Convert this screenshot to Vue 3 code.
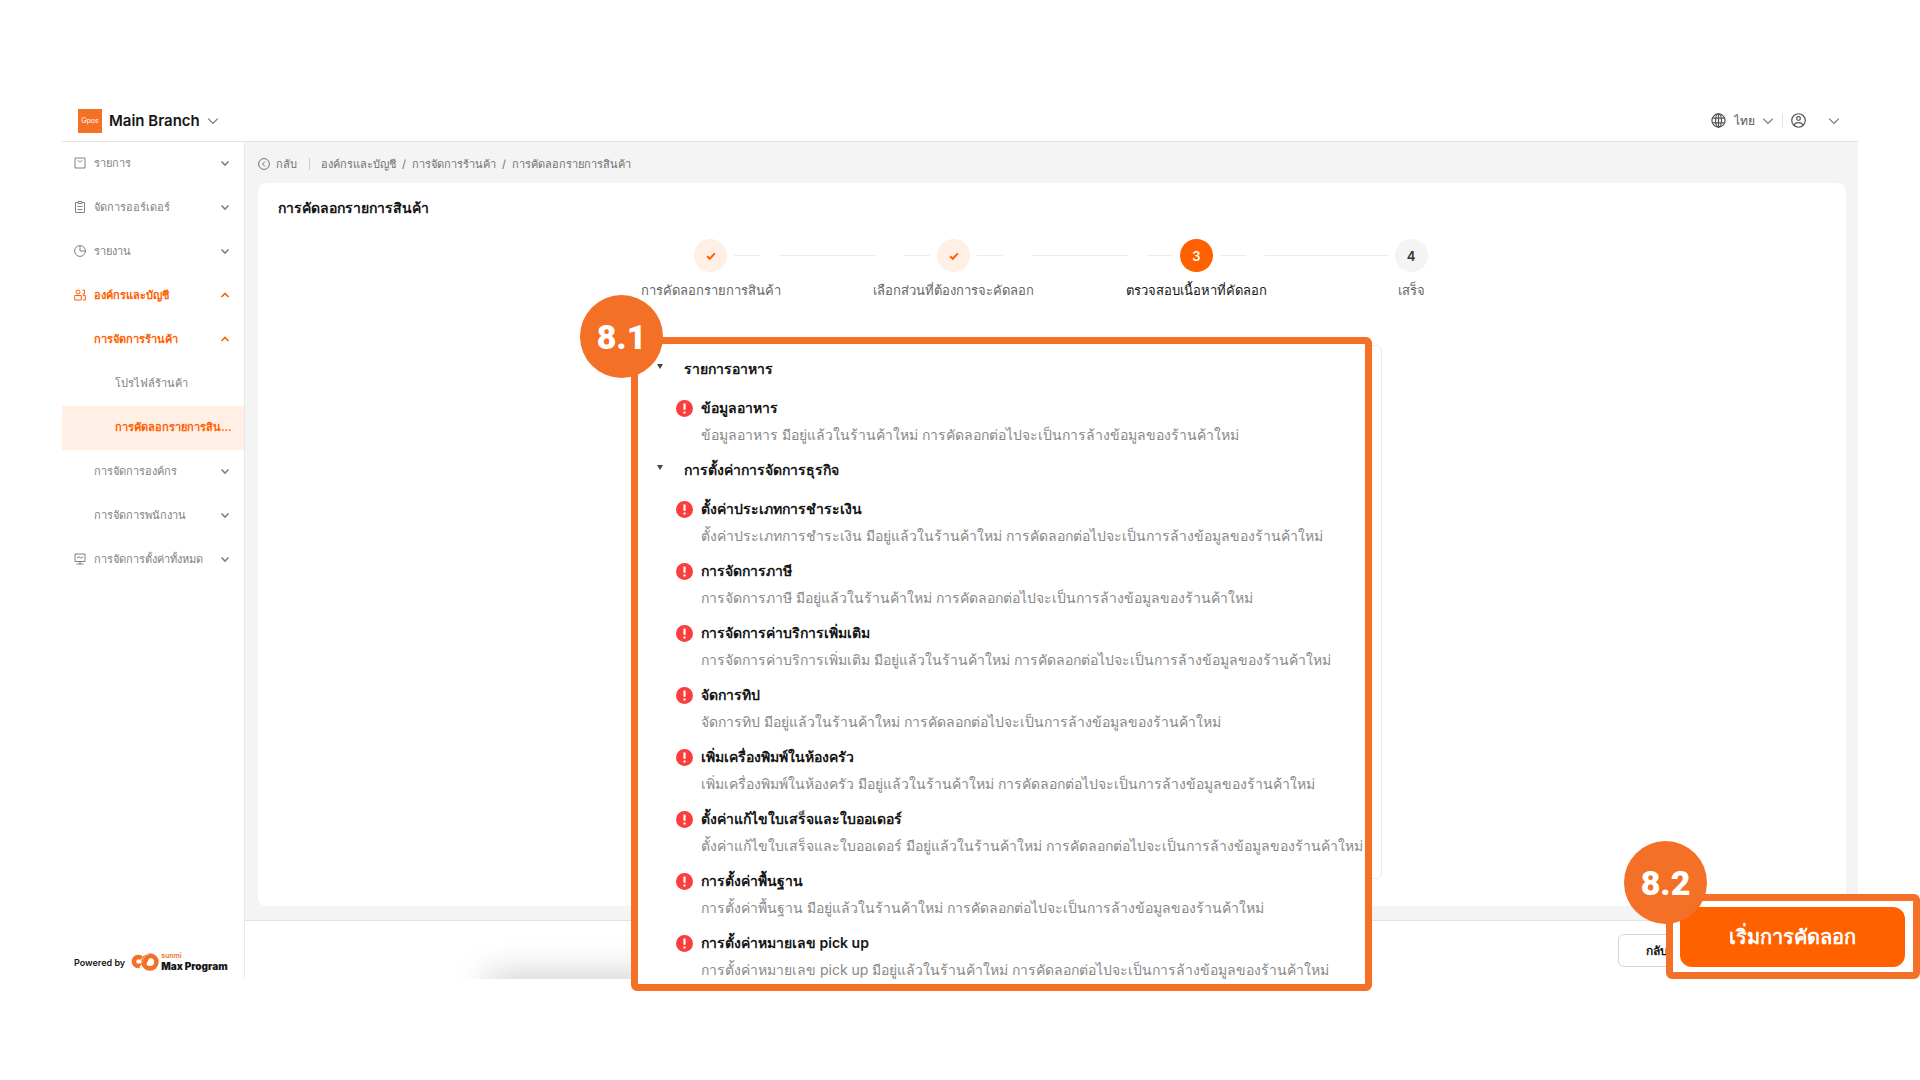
<script setup>
import { ref } from 'vue'

const language = ref('th')

const menu = [
  { label: 'รายการ', icon: 'bag', level: 1 },
  { label: 'จัดการออร์เดอร์', icon: 'clipboard', level: 1 },
  { label: 'รายงาน', icon: 'clock', level: 1 },
  { label: 'องค์กรและบัญชี', icon: 'people', level: 1, open: true },
  { label: 'การจัดการร้านค้า', level: 2, open: true },
  { label: 'โปรไฟล์ร้านค้า', level: 3 },
  { label: 'การคัดลอกรายการสิน...', level: 3, active: true },
  { label: 'การจัดการองค์กร', level: 2 },
  { label: 'การจัดการพนักงาน', level: 2 },
  { label: 'การจัดการตั้งค่าทั้งหมด', icon: 'monitor', level: 1 },
]

const crumbs = ['องค์กรและบัญชี', 'การจัดการร้านค้า', 'การคัดลอกรายการสินค้า']

const steps = [
  { n: 1, label: 'การคัดลอกรายการสินค้า', state: 'done' },
  { n: 2, label: 'เลือกส่วนที่ต้องการจะคัดลอก', state: 'done' },
  { n: 3, label: 'ตรวจสอบเนื้อหาที่คัดลอก', state: 'current' },
  { n: 4, label: 'เสร็จ', state: 'waiting' },
]

const notice = 'มีอยู่แล้วในร้านค้าใหม่ การคัดลอกต่อไปจะเป็นการล้างข้อมูลของร้านค้าใหม่'

const groups = [
  { title: 'รายการอาหาร', items: ['ข้อมูลอาหาร'] },
  {
    title: 'การตั้งค่าการจัดการธุรกิจ',
    items: [
      'ตั้งค่าประเภทการชำระเงิน',
      'การจัดการภาษี',
      'การจัดการค่าบริการเพิ่มเติม',
      'จัดการทิป',
      'เพิ่มเครื่องพิมพ์ในห้องครัว',
      'ตั้งค่าแก้ไขใบเสร็จและใบออเดอร์',
      'การตั้งค่าพื้นฐาน',
      'การตั้งค่าหมายเลข pick up',
    ],
  },
]
</script>

<template>
  <div class="app">
    <header class="topbar">
      <button class="branch" type="button">
        <span class="brand">Gpos</span>
        <span class="branch-name">Main Branch</span>
        <svg class="chev" viewBox="0 0 10 10"><path d="M1 3l4 4 4-4" /></svg>
      </button>
      <div class="account">
        <svg class="globe" viewBox="0 0 16 16">
          <circle cx="8" cy="8" r="7" /><ellipse cx="8" cy="8" rx="3.2" ry="7" /><path d="M1.6 5.4h12.8M1.6 10.6h12.8M8 1v14" />
        </svg>
        <select v-model="language" class="language" aria-label="ภาษา">
          <option value="th">ไทย</option>
        </select>
        <svg class="chev" viewBox="0 0 10 10"><path d="M1 3l4 4 4-4" /></svg>
        <button class="user" type="button" aria-label="บัญชีผู้ใช้">
          <svg class="globe" viewBox="0 0 16 16">
            <circle cx="8" cy="8" r="7.2" /><circle cx="8" cy="5.8" r="2" /><path d="M3.4 13.2C3.8 10.9 5 10.2 8 10.2s4.2.7 4.6 3" />
          </svg>
          <svg class="chev" viewBox="0 0 10 10"><path d="M1 3l4 4 4-4" /></svg>
        </button>
      </div>
    </header>

    <div class="body">
      <nav class="sidebar">
        <ul class="menu">
          <li v-for="m in menu" :key="m.label">
            <a href="#" class="menu-item" :class="['level-' + m.level, { open: m.open, active: m.active }]">
              <svg v-if="m.icon" class="menu-icon" viewBox="0 0 12 12">
                <path v-if="m.icon === 'bag'" d="M1 1h10v10H1zM4 3c.4 2.200 3.600 2.200 4 0" />
                <path v-else-if="m.icon === 'clipboard'" d="M4 1.500H1.500v10h9v-10H8M4 .6h4v2H4zM3.500 5.500h5M3.500 8.500h5" />
                <path v-else-if="m.icon === 'clock'" d="M6 .6a5.400 5.400 0 1 0 5.400 5.400A5.400 5.400 0 0 0 6 .6zM6 .6V6h5.400" />
                <path v-else-if="m.icon === 'people'" d="M4 1a2 2 0 1 0 0 4 2 2 0 0 0 0-4zM.7 6.500h6.600V11H.7zM8.200 1.200h2.300V5H8.200M9 6.500h2.300V11H9" />
                <path v-else d="M1 1h10v7.500H1zM3 5l2-1.200 2 1.400L9 4M6 8.500V11M2.500 11h7" />
              </svg>
              <span class="menu-label">{{ m.label }}</span>
              <svg v-if="m.level < 3" class="chev bold" viewBox="0 0 10 10">
                <path :d="m.open ? 'M1.5 7L5 3.5 8.5 7' : 'M1.5 3.5L5 7l3.5-3.5'" />
              </svg>
            </a>
          </li>
        </ul>
        <div class="powered">
          <span>Powered by</span>
          <svg class="sunmi-mark" viewBox="0 0 28 18">
            <path d="M10.500 5.200A4.500 4.500 0 1 0 10.500 11.800" />
            <circle cx="19" cy="9" r="6.400" />
            <path class="split" d="M9 15C13 12 12 5 17 1" />
            <path d="M11.500 13C14.500 10 14 6 17.500 3" />
          </svg>
          <span class="program"><small>sunmi</small><b>Max Program</b></span>
        </div>
      </nav>

      <div class="content">
        <main class="main">
          <nav class="crumbs">
            <a href="#" class="back">
              <svg viewBox="0 0 12 12"><circle cx="6" cy="6" r="5.400" /><path d="M7 3.500L4.500 6 7 8.500" /></svg>
              กลับ
            </a>
            <template v-for="(c, i) in crumbs" :key="c">
              <span v-if="i" class="slash">/</span>
              <a href="#">{{ c }}</a>
            </template>
          </nav>

          <section class="card">
            <h1>การคัดลอกรายการสินค้า</h1>
            <ol class="steps">
              <li v-for="s in steps" :key="s.n" class="step" :class="s.state">
                <div class="step-head">
                  <i class="tick before"></i>
                  <span class="dot">
                    <svg v-if="s.state === 'done'" viewBox="0 0 10 10"><path d="M1.200 5.200l2.600 2.600 5-5.400" /></svg>
                    <template v-else>{{ s.n }}</template>
                  </span>
                  <i class="tick after"></i>
                </div>
                <span class="step-label">{{ s.label }}</span>
              </li>
            </ol>

            <div class="panel">
              <div class="review">
                <span class="badge">8.1</span>
                <section v-for="g in groups" :key="g.title" class="group">
                  <h2><button type="button" aria-expanded="true"><i class="caret"></i>{{ g.title }}</button></h2>
                  <ul>
                    <li v-for="t in g.items" :key="t" class="warning">
                      <svg viewBox="0 0 16 16"><circle cx="8" cy="8" r="8" /><path d="M8 3.400v5.800M8 10.800v2" /></svg>
                      <div>
                        <h3>{{ t }}</h3>
                        <p>{{ t }} {{ notice }}</p>
                      </div>
                    </li>
                  </ul>
                </section>
              </div>
            </div>
          </section>
        </main>

        <footer class="footer">
          <div class="shade"><i></i></div>
          <button class="secondary" type="button">กลับ</button>
          <div class="action">
            <span class="badge">8.2</span>
            <button class="primary" type="button">เริ่มการคัดลอก</button>
          </div>
        </footer>
      </div>
    </div>
  </div>
</template>

<style>
body {
  margin: 0;
  background: #fff;
}
</style>

<style scoped>
* {
  box-sizing: border-box;
}
.app {
  margin: 100px 62px;
  font-family: Inter, "Liberation Sans", sans-serif;
  font-size: 11px;
  color: #161616;
}
ul,
ol,
h1,
h2,
h3,
p {
  margin: 0;
  padding: 0;
  list-style: none;
}
a {
  color: inherit;
  text-decoration: none;
}
button,
select {
  padding: 0;
  border: 0;
  background: none;
  font: inherit;
  color: inherit;
  white-space: nowrap;
}
svg {
  flex: none;
  fill: none;
  stroke: currentColor;
}
.chev {
  width: 12px;
  height: 12px;
  color: #777;
}
.chev.bold {
  width: 10px;
  height: 10px;
  stroke-width: 1.6;
  color: inherit;
}
.topbar {
  display: flex;
  justify-content: space-between;
  align-items: center;
  height: 42px;
  padding: 0 18px 0 16px;
  border-bottom: 1px solid #e2e2e2;
}
.branch {
  display: flex;
  align-items: center;
  gap: 7px;
}
.brand {
  display: grid;
  place-items: center;
  width: 24px;
  height: 24px;
  background: #f37026;
  color: #fff;
  font-size: 7px;
}
.branch-name {
  font-size: 15px;
  font-weight: 600;
}
.account {
  display: flex;
  align-items: center;
  color: #555;
  font-size: 12px;
}
.globe {
  width: 15px;
  height: 15px;
  stroke-width: 1.3;
}
.language {
  width: 28px;
  margin-left: 8px;
  appearance: none;
}
.user {
  display: flex;
  align-items: center;
  gap: 22px;
  margin-left: 8px;
  padding-left: 8px;
  border-left: 1px solid #e2e2e2;
}
.body {
  display: flex;
}
.sidebar {
  display: flex;
  flex: none;
  flex-direction: column;
  justify-content: space-between;
  width: 183px;
  border-right: 1px solid #e8e8e8;
}
.menu-item {
  display: flex;
  align-items: center;
  height: 44px;
  padding: 0 14px 2px 12px;
  color: #808080;
  font-weight: 500;
  white-space: nowrap;
}
.menu-icon {
  width: 12px;
  height: 12px;
  margin-right: 8px;
}
.menu-label {
  flex: 1;
}
.level-2 {
  padding-left: 32px;
}
.level-3 {
  padding-left: 53px;
}
.open,
.active {
  color: #ff6000;
  font-weight: 600;
}
.active {
  background: #ffefe5;
}
.powered {
  display: flex;
  align-items: center;
  padding: 0 12px 7px;
  font-size: 9px;
  font-weight: 600;
  white-space: nowrap;
}
.sunmi-mark {
  width: 28px;
  height: 18px;
  margin: 0 2px 0 6px;
  stroke: #f37026;
  stroke-width: 4.6;
}
.split {
  stroke: #fff;
  stroke-width: 2;
}
.program {
  display: flex;
  flex-direction: column;
}
.program small {
  color: #f37026;
  font-size: 7px;
  line-height: 8px;
}
.program b {
  font-size: 10px;
  line-height: 12px;
}
.content {
  flex: 1;
  min-width: 0;
}
.main {
  padding: 0 12px 14px 13px;
  background: #f4f4f4;
}
.crumbs {
  display: flex;
  align-items: center;
  height: 41px;
  padding-top: 2px;
  color: #707070;
}
.back {
  display: flex;
  align-items: center;
  gap: 6px;
  margin-right: 11px;
  padding-right: 12px;
  border-right: 1px solid #ccc;
  line-height: 12px;
}
.back svg {
  width: 12px;
  height: 12px;
}
.slash {
  width: 16px;
  text-align: center;
}
.card {
  padding: 12px 20px 27px;
  border-radius: 8px;
  background: #fff;
}
h1 {
  font-size: 14px;
  font-weight: 600;
  line-height: 26px;
}
.steps {
  display: flex;
  justify-content: center;
  height: 106px;
  margin-top: 18px;
  padding-right: 34px;
}
.step {
  position: relative;
  display: flex;
  flex-direction: column;
  align-items: center;
  width: 136px;
  margin-right: 98px;
  color: #666;
}
.step:nth-child(2) {
  width: 154px;
}
.step:last-child {
  width: 33px;
  margin: 0 0 0 32px;
}
.step:not(:last-child)::after {
  content: "";
  position: absolute;
  top: 16px;
  left: 100%;
  width: 97px;
  height: 1px;
  background: #ececec;
}
.step:nth-child(3)::after {
  width: 124px;
}
.step-head {
  display: flex;
  align-items: center;
  gap: 7px;
}
.tick {
  width: 26px;
  height: 1px;
  background: #ececec;
}
.step:first-child .before,
.step:last-child .tick {
  visibility: hidden;
}
.dot {
  display: grid;
  place-items: center;
  width: 33px;
  height: 33px;
  border-radius: 50%;
  background: #f4f4f4;
  color: #333;
  font-size: 13px;
  font-weight: 600;
}
.dot svg {
  width: 10px;
  height: 10px;
  stroke-width: 2;
}
.done .dot {
  background: #ffefe5;
  color: #ff6000;
}
.current .dot {
  background: #ff6000;
  color: #fff;
}
.step-label {
  margin-top: 8px;
  font-size: 13px;
  line-height: 20px;
  white-space: nowrap;
}
.current .step-label {
  color: #161616;
}
.panel {
  position: relative;
  width: 660px;
  height: 534px;
  margin: 0 auto;
  border: 1px solid #ececec;
  border-radius: 6px;
}
.review {
  position: absolute;
  z-index: 2;
  top: -9px;
  right: 9px;
  left: -92px;
  height: 654px;
  padding: 9px 12px 0 19px;
  border: 7px solid #f37026;
  border-radius: 6px;
  background: #fff;
}
.badge {
  position: absolute;
  top: -49px;
  left: -58px;
  display: grid;
  place-items: center;
  width: 83px;
  height: 83px;
  border-radius: 50%;
  background: #f37026;
  color: #fff;
  font-family: Roboto, sans-serif;
  font-size: 34px;
  font-weight: 900;
}
h2 button {
  display: flex;
  align-items: center;
  height: 32px;
  font-size: 14px;
  font-weight: 600;
}
.caret {
  width: 6px;
  margin-right: 21px;
  border: 3px solid transparent;
  border-top: 5px solid #444;
  border-bottom: 5px solid transparent;
}
.group ul {
  padding-top: 7px;
}
.warning {
  display: flex;
  gap: 8px;
  height: 62px;
  padding-left: 19px;
  font-size: 14px;
}
.warning svg {
  width: 17px;
  height: 17px;
  margin-top: 8px;
  fill: #fa3e3e;
  stroke: none;
}
.warning svg path {
  stroke: #fff;
  stroke-width: 2;
}
.warning h3 {
  font-size: 14px;
  font-weight: 600;
  line-height: 32px;
}
.warning p {
  color: #888;
  font-weight: 400;
  line-height: 22px;
  white-space: nowrap;
}
.footer {
  position: relative;
  display: flex;
  justify-content: flex-end;
  align-items: center;
  height: 59px;
  padding-right: 168px;
  border-top: 1px solid #e2e2e2;
}
.shade {
  position: absolute;
  inset: 0;
  overflow: hidden;
}
.shade i {
  position: absolute;
  bottom: -14px;
  left: 250px;
  width: 840px;
  height: 10px;
  box-shadow: 0 0 34px 8px rgba(0, 0, 0, 0.22);
}
.secondary {
  position: relative;
  width: 72px;
  height: 33px;
  padding-left: 6px;
  border: 1px solid #d4d4d4;
  border-radius: 6px;
  font-size: 12px;
  font-weight: 600;
}
.action {
  position: absolute;
  z-index: 2;
  right: -62px;
  bottom: 0;
  width: 254px;
  height: 85px;
  padding: 6px 8px 5px 7px;
  border: 7px solid #f37026;
  border-radius: 6px;
  background: #fff;
}
.action .badge {
  top: -60px;
  left: -49px;
}
.primary {
  width: 100%;
  height: 60px;
  border-radius: 12px;
  background: #ff6000;
  color: #fff;
  font-size: 20px;
  font-weight: 600;
}
</style>
